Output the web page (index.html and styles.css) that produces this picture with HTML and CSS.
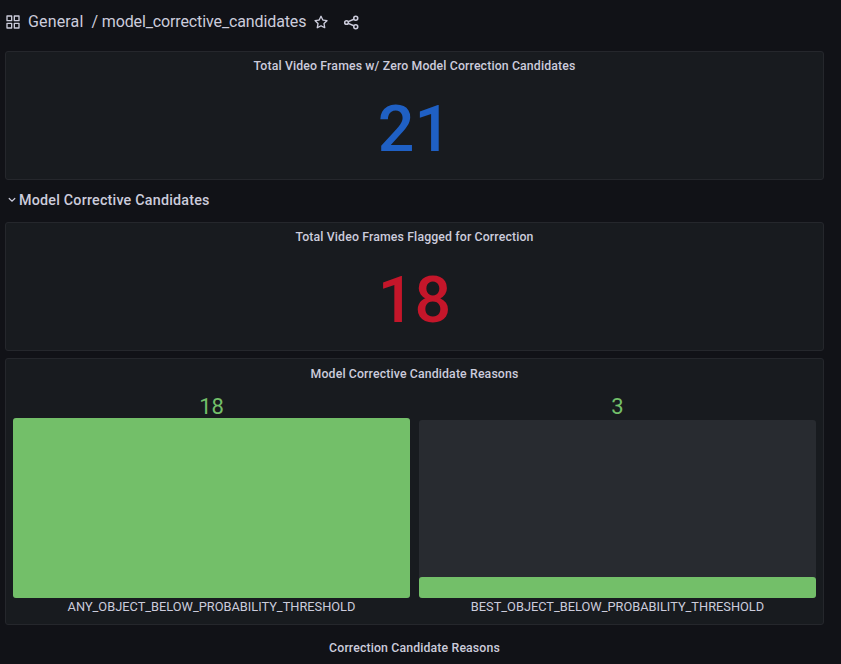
FILE: index.html
```
<!DOCTYPE html>
<html lang="en">
<head>
<meta charset="utf-8">
<title>model_corrective_candidates</title>
<link rel="stylesheet" href="styles.css">
</head>
<body>
<header class="toolbar">
  <svg class="icon apps" viewBox="0 0 24 24"><path d="M10,13H3a1,1,0,0,0-1,1v7a1,1,0,0,0,1,1h7a1,1,0,0,0,1-1V14A1,1,0,0,0,10,13ZM9,20H4V15H9ZM21,2H14a1,1,0,0,0-1,1v7a1,1,0,0,0,1,1h7a1,1,0,0,0,1-1V3A1,1,0,0,0,21,2ZM20,9H15V4h5Zm1,4H14a1,1,0,0,0-1,1v7a1,1,0,0,0,1,1h7a1,1,0,0,0,1-1V14A1,1,0,0,0,21,13Zm-1,7H15V15h5ZM10,2H3A1,1,0,0,0,2,3v7a1,1,0,0,0,1,1h7a1,1,0,0,0,1-1V3A1,1,0,0,0,10,2ZM9,9H4V4H9Z"/></svg>
  <span class="folder">General</span>
  <span class="slash">/</span>
  <span class="name">model_corrective_candidates</span>
  <svg class="icon star" viewBox="0 0 24 24"><path d="M22,9.67A1,1,0,0,0,21.14,9l-5.69-.83L12.9,3a1,1,0,0,0-1.8,0L8.55,8.16,2.86,9a1,1,0,0,0-.81.68,1,1,0,0,0,.25,1l4.13,4-1,5.68A1,1,0,0,0,6.9,21.44L12,18.77l5.1,2.67a.93.93,0,0,0,.46.12,1,1,0,0,0,.59-.19,1,1,0,0,0,.4-1l-1-5.68,4.13-4A1,1,0,0,0,22,9.67Zm-6.15,4a1,1,0,0,0-.29.88l.72,4.2-3.76-2a1.06,1.06,0,0,0-.94,0l-3.76,2,.72-4.2a1,1,0,0,0-.29-.88l-3-3,4.21-.61a1,1,0,0,0,.76-.55L12,5.7l1.88,3.82a1,1,0,0,0,.76.55l4.21.61Z"/></svg>
  <svg class="icon share" viewBox="0 0 24 24"><g fill="none" stroke="currentColor" stroke-width="2.2"><circle cx="5" cy="12" r="2.6"/><circle cx="18" cy="6" r="2.8"/><circle cx="18" cy="18" r="2.8"/><path d="M7.5 10.8L15.3 7.3M7.5 13.2L15.3 16.7"/></g></svg>
</header>
<main class="dashboard">
  <section class="panel stat">
    <h2 class="title">Total Video Frames w/ Zero Model Correction Candidates</h2>
    <div class="value blue">21</div>
  </section>
  <div class="row">
    <svg class="chevron" viewBox="0 0 8 6"><path d="M1.2 1.5L4 4.2L6.8 1.5" fill="none" stroke="currentColor" stroke-width="1.2" stroke-linecap="round"/></svg>
    <span>Model Corrective Candidates</span>
  </div>
  <section class="panel stat">
    <h2 class="title">Total Video Frames Flagged for Correction</h2>
    <div class="value red">18</div>
  </section>
  <section class="panel reasons">
    <h2 class="title">Model Corrective Candidate Reasons</h2>
    <div class="gauges">
      <div class="gauge">
        <div class="count">18</div>
        <div class="track full"><div class="fill" style="height:180px"></div></div>
        <div class="label">ANY_OBJECT_BELOW_PROBABILITY_THRESHOLD</div>
      </div>
      <div class="gauge">
        <div class="count">3</div>
        <div class="track"><div class="fill" style="height:21px"></div></div>
        <div class="label">BEST_OBJECT_BELOW_PROBABILITY_THRESHOLD</div>
      </div>
    </div>
  </section>
  <section class="panel bare">
    <h2 class="title">Correction Candidate Reasons</h2>
  </section>
</main>
</body>
</html>
```
FILE: styles.css
```
* { box-sizing: border-box; }
body {
  margin: 0;
  height: 664px;
  overflow: hidden;
  background: #111217;
  color: #ccccdc;
  font-family: Roboto, sans-serif;
}
.toolbar {
  display: flex;
  align-items: center;
  height: 43px;
  padding-left: 5px;
  font-size: 16px;
  letter-spacing: 0.15px;
  white-space: nowrap;
}
.icon { flex: none; width: 16px; height: 16px; fill: currentColor; }
.apps { width: 16px; height: 16px; margin-right: 7px; }
.slash { margin: 0 3.5px 0 8px; }
.name { letter-spacing: -0.12px; }
.star { margin-left: 7px; position: relative; top: 0.5px; }
.share { width: 17px; height: 17px; margin-left: 14px; position: relative; top: 0.5px; }
.dashboard { width: 819px; margin: 8px 0 0 5px; }
.panel {
  background: #181b1f;
  border: 1px solid #25272c;
  border-radius: 3px;
}
.title {
  margin: 0;
  height: 28px;
  line-height: 28px;
  text-align: center;
  font-size: 12.3px;
  font-weight: 500;
  letter-spacing: 0.135px;
}
.stat { height: 129px; }
.value {
  height: 99px;
  line-height: 99px;
  text-align: center;
  font-size: 64.5px;
  font-weight: 500;
}
.blue { color: #1f60c4; }
.red { color: #c4162a; }
.row {
  display: flex;
  align-items: center;
  height: 42px;
  padding: 0 0 2px 3px;
  font-size: 14.3px;
  font-weight: 500;
  letter-spacing: 0.21px;
}
.chevron { width: 8px; height: 6px; margin-right: 3px; }
.reasons { height: 267px; margin-top: 7px; }
.reasons .title { height: 29px; line-height: 30px; }
.gauges { display: grid; grid-template-columns: 1fr 1fr; gap: 9px; padding: 0 7px; }
.gauge { text-align: center; }
.count {
  height: 30px;
  line-height: 38px;
  color: #73bf69;
  font-size: 22px;
}
.track {
  display: flex;
  align-items: flex-end;
  height: 178px;
  margin-top: 2px;
  background: #282b30;
  border-radius: 3px;
}
.full { height: 180px; margin-top: 0; }
.fill { width: 100%; background: #73bf69; border-radius: 3px; }
.label { height: 18px; line-height: 18px; font-size: 12.8px; }
.bare { margin-top: 8px; background: none; border-color: transparent; }
```
